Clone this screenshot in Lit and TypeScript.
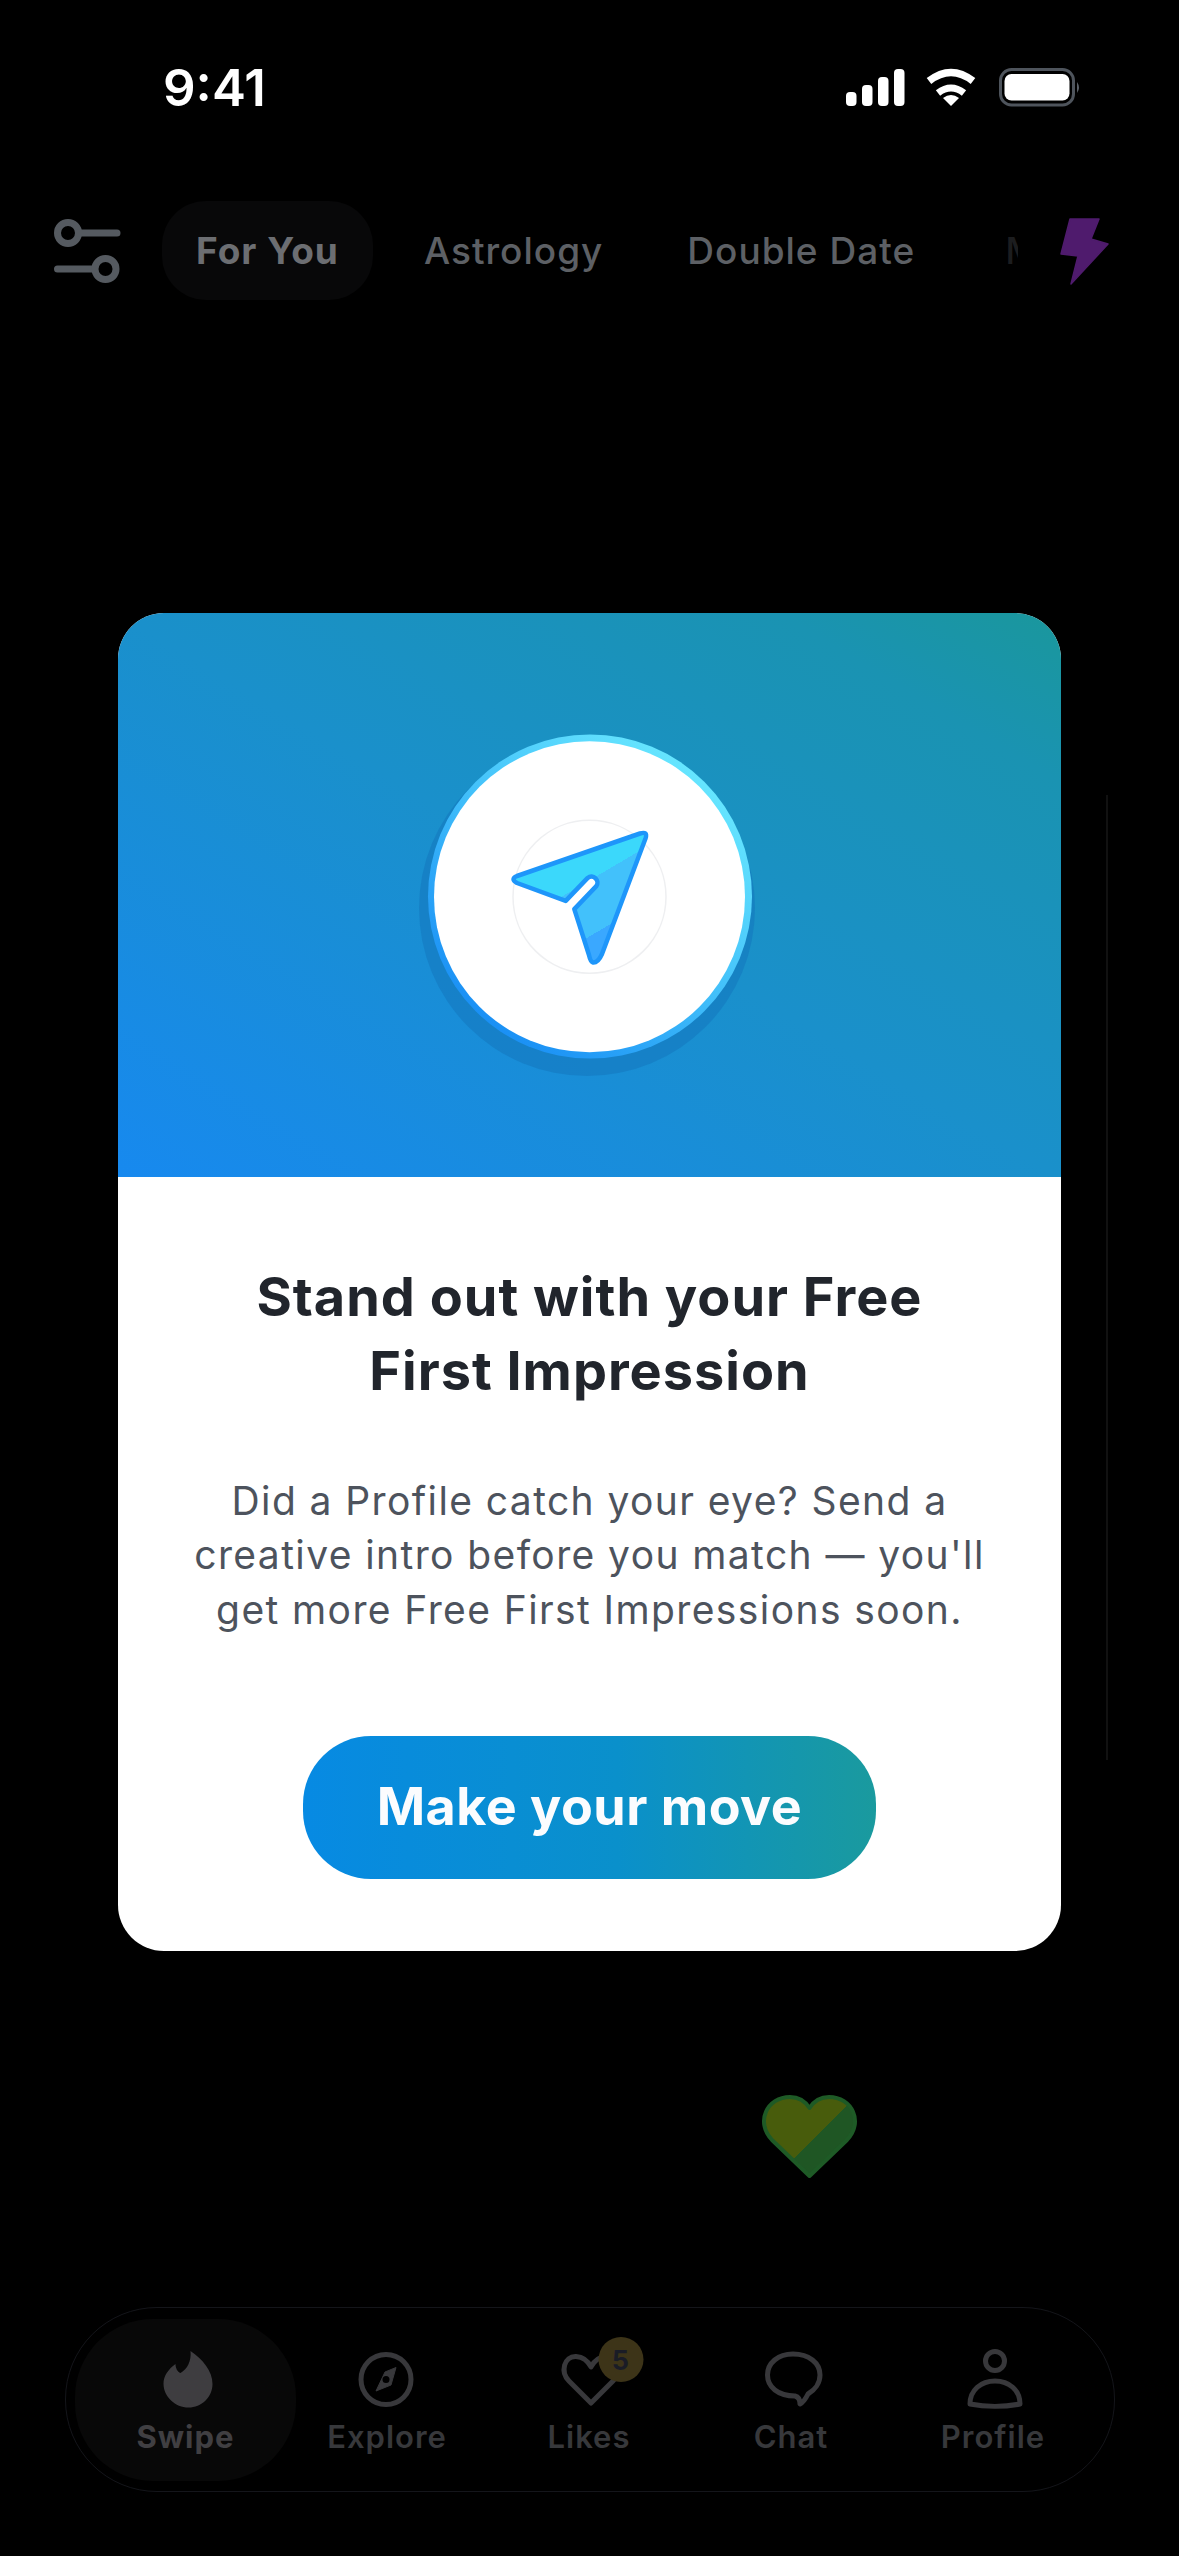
import { LitElement, html, css } from "lit";
import { customElement } from "lit/decorators.js";

@customElement("app-root")
export class AppRoot extends LitElement {
  static styles = css`
    :host {
      display: block;
      position: relative;
      width: 1179px;
      height: 2556px;
      overflow: hidden;
      background: #000;
      font-family: Inter, "Liberation Sans", sans-serif;
    }
    .status {
      box-sizing: border-box;
      height: 201px;
      padding: 60px 94px 0 163px;
      display: flex;
      justify-content: space-between;
      align-items: flex-start;
    }
    .time {
      color: #fff;
      font-size: 51px;
      font-weight: 600;
      line-height: 55px;
      letter-spacing: 0;
    }
    .status svg { width: 245px; height: 55px; display: block; }
    .tabs {
      height: 99px;
      padding-left: 52px;
      display: flex;
      align-items: center;
    }
    .filter { width: 70px; height: 70px; margin-right: 40px; flex: none; display: block; }
    .tab {
      height: 99px;
      padding: 0 33px;
      margin-right: 18px;
      display: flex;
      align-items: center;
      flex: none;
      color: #5d6065;
      font-size: 37px;
      font-weight: 500;
      letter-spacing: 1px;
      white-space: nowrap;
    }
    .tab.on {
      padding: 0 34px;
      background: #080809;
      border-radius: 44px;
      color: #6c6e72;
      font-weight: 700;
    }
    .peek {
      width: 13px;
      margin-left: 39px;
      margin-right: 42px;
      overflow: hidden;
      color: #1c1d1f;
      font-size: 37px;
      font-weight: 500;
      flex: none;
    }
    .bolt { width: 50px; height: 70px; flex: none; display: block; }
    .heart {
      display: block;
      width: 100px;
      height: 90px;
      margin: 1792px 0 0 760px;
    }
    .nav {
      box-sizing: border-box;
      width: 1050px;
      height: 185px;
      margin: 125px 0 0 65px;
      padding: 10.5px 0 0 18px;
      border: 1.5px solid #14151a;
      border-radius: 92px;
      display: grid;
      grid-template-columns: repeat(5, 202px);
    }
    .item {
      box-sizing: border-box;
      height: 162px;
      padding-top: 16px;
      display: flex;
      flex-direction: column;
      align-items: center;
      color: #37383b;
      font-size: 31px;
      font-weight: 600;
      letter-spacing: 1px;
      line-height: 40px;
    }
    .item.on {
      margin: 0 -10px 0 -9px;
      background: #080808;
      border-radius: 78px;
      color: #403f42;
      font-weight: 700;
    }
    .item svg { width: 100px; height: 74px; display: block; margin-bottom: 8px; }
    .badge-num { font: 700 27px Inter, "Liberation Sans", sans-serif; fill: #1a1c26; }
    .rail {
      position: absolute;
      left: 1106px;
      top: 795px;
      width: 2px;
      height: 965px;
      background: #111;
    }
    .modal {
      position: absolute;
      left: 118px;
      top: 613px;
      width: 943px;
      height: 1338px;
      background: #fff;
      border-radius: 46px;
      overflow: hidden;
      display: flex;
      flex-direction: column;
      align-items: center;
      text-align: center;
    }
    .hero {
      align-self: stretch;
      height: 564px;
      box-sizing: border-box;
      padding-top: 87px;
      display: flex;
      justify-content: center;
      background: linear-gradient(to top right, #1789ef 0%, #1a90cb 50%, #1a93b2 85%, #1a979c 100%);
    }
    .hero svg { width: 400px; height: 400px; display: block; }
    h1 {
      margin: 83px 0 0;
      color: #21252c;
      font-size: 54px;
      font-weight: 700;
      line-height: 74px;
      letter-spacing: 1px;
      white-space: nowrap;
    }
    p {
      margin: 65.5px 0 0;
      color: #4d535d;
      font-size: 39px;
      font-weight: 400;
      line-height: 54.5px;
      letter-spacing: 1.4px;
      white-space: nowrap;
    }
    button {
      width: 573px;
      height: 143px;
      margin-top: 99px;
      border: 0;
      padding: 0 0 3px;
      border-radius: 68px;
      background: linear-gradient(90deg, #078ae3 0%, #0a90cb 55%, #1a9a9e 100%);
      color: #fbfcfe;
      font-family: inherit;
      font-size: 52px;
      font-weight: 700;
      letter-spacing: 0.5px;
    }
  `;

  render() {
    return html`
      <div class="status">
        <div class="time">9:41</div>
        <svg viewBox="840 60 245 55">
          <rect x="846" y="92" width="10.5" height="14" rx="4" fill="#fff" />
          <rect x="862" y="85" width="10.5" height="21" rx="4" fill="#fff" />
          <rect x="878" y="77" width="10.5" height="29" rx="4" fill="#fff" />
          <rect x="894" y="69" width="10.5" height="37" rx="4" fill="#fff" />
          <path d="M929 81 Q951 64 973 81" fill="none" stroke="#fff" stroke-width="7.5" />
          <path d="M938 93 Q951 83 964 93" fill="none" stroke="#fff" stroke-width="7" />
          <path d="M943 98 Q951 92 959 98 L951 106Z" fill="#fff" />
          <rect x="1000.5" y="69.5" width="73" height="35.5" rx="11" fill="none" stroke="#4e545c" stroke-width="3" />
          <rect x="1004.5" y="74" width="65" height="26.5" rx="7" fill="#fff" />
          <path d="M1077 82 Q1081 87.5 1077 93Z" fill="#5a6068" />
        </svg>
      </div>

      <div class="tabs">
        <svg class="filter" viewBox="50 215 70 70" fill="none" stroke="#555a60" stroke-width="7">
          <circle cx="66" cy="232" r="10.5" />
          <path d="M77 232H115M55.500 268H92" stroke-linecap="round" />
          <circle cx="103.500" cy="268" r="10.500" />
        </svg>
        <div class="tab on">For You</div>
        <div class="tab">Astrology</div>
        <div class="tab">Double Date</div>
        <div class="peek">M</div>
        <svg class="bolt" viewBox="1059 215 50 70">
          <path d="M1069 218H1098L1090 238L1107 243L1070 283L1077 255L1060 253Z" fill="#4f1b6d" stroke="#4f1b6d" stroke-width="1.5" stroke-linejoin="round" />
        </svg>
      </div>

      <svg class="heart" viewBox="760 2092 100 90">
        <defs>
          <linearGradient id="hg" gradientUnits="userSpaceOnUse" x1="809" y1="2123" x2="829" y2="2143">
            <stop offset="0.5" stop-color="#485c0c" />
            <stop offset="0.5" stop-color="#1f5624" />
          </linearGradient>
        </defs>
        <path d="M809.500 2176 L772 2140 C755 2122 767 2097 790 2097 C798 2097 805 2101 809.500 2108 C814 2101 821 2097 829 2097 C852 2097 864 2122 847 2140Z" fill="url(#hg)" stroke="#1e5a26" stroke-width="4" stroke-linejoin="round" />
      </svg>

      <nav class="nav">
        <div class="item on">
          <svg viewBox="135.500 2335 100 74">
            <path d="M190 2351C202 2359 212 2371 212 2384C212 2397 201 2407.500 188 2407.500C175 2407.500 163 2397 163 2383.500C163 2376 168 2369 175 2364C175 2368 177 2372 180 2373C187 2369 191 2361 190 2351Z" fill="#3e3d40" />
          </svg>
          Swipe
        </div>
        <div class="item">
          <svg viewBox="337 2335 100 74">
            <circle cx="386" cy="2379.500" r="25" fill="none" stroke="#38383b" stroke-width="5" />
            <path d="M396 2367.500L385 2372L376 2391L391 2385Z" fill="#38383b" stroke="#38383b" stroke-width="1" stroke-linejoin="round" />
            <circle cx="386" cy="2379.500" r="3.500" fill="#000" />
          </svg>
          Explore
        </div>
        <div class="item">
          <svg viewBox="539 2335 100 74" overflow="visible">
            <path d="M591 2403L569 2381C560 2372 564 2356 576 2356.500C583 2357 588 2361 591 2367C594 2361 599 2357 606 2356.500C618 2356 622 2372 613 2381Z" fill="none" stroke="#38383b" stroke-width="5" stroke-linejoin="round" />
            <circle cx="621" cy="2359.500" r="22.500" fill="#3d3418" />
            <text class="badge-num" x="621" y="2369.500" text-anchor="middle">5</text>
          </svg>
          Likes
        </div>
        <div class="item">
          <svg viewBox="741 2335 100 74">
            <path d="M793 2354C809 2354 820 2363 820 2375C820 2383 815 2390 808 2394C806 2398 804 2402 800 2404C800 2400 799 2397 795 2396C778 2396 767.500 2387 767.500 2375C767.500 2363 778 2354 793 2354Z" fill="none" stroke="#38383b" stroke-width="5" stroke-linejoin="round" />
          </svg>
          Chat
        </div>
        <div class="item">
          <svg viewBox="943 2335 100 74">
            <circle cx="995" cy="2361" r="9.500" fill="none" stroke="#38383b" stroke-width="5" />
            <path d="M970 2404C970 2390 981 2381 995 2381C1009 2381 1020 2390 1020 2404C1005 2407 985 2407 970 2404Z" fill="none" stroke="#38383b" stroke-width="5" stroke-linejoin="round" />
          </svg>
          Profile
        </div>
      </nav>

      <div class="rail"></div>

      <section class="modal">
        <div class="hero">
          <svg viewBox="390 700 400 400">
            <defs>
              <linearGradient id="ring" x1="0.85" y1="0.1" x2="0.2" y2="0.9">
                <stop offset="0" stop-color="#68e8ff" />
                <stop offset="0.5" stop-color="#42c0fa" />
                <stop offset="1" stop-color="#1a90f5" />
              </linearGradient>
              <linearGradient id="plane" gradientUnits="userSpaceOnUse" x1="590" y1="840" x2="640" y2="925">
                <stop offset="0.35" stop-color="#3bd8fb" />
                <stop offset="0.35" stop-color="#42c1fb" />
                <stop offset="0.84" stop-color="#42c1fb" />
                <stop offset="0.84" stop-color="#3aa8ff" />
              </linearGradient>
            </defs>
            <circle cx="587" cy="908" r="168" fill="#1476bd" opacity="0.55" />
            <circle cx="590" cy="896.500" r="162" fill="url(#ring)" />
            <circle cx="589.500" cy="896.800" r="155.500" fill="#fff" />
            <circle cx="589.500" cy="896.800" r="76.500" fill="none" stroke="#eeeff1" stroke-width="1.500" />
            <path d="M640 833.500Q648 831 645.500 838.500L602 954Q598 963 593 962.500Q590.500 962 589 955L574.300 909.100L596.300 886.100A6 6 0 0 0 587.700 877.900L565.700 900.900L517 883Q510 879 517 876Z" fill="url(#plane)" stroke="#1e96fa" stroke-width="4.500" stroke-linejoin="round" />
          </svg>
        </div>
        <h1>Stand out with your Free<br />First Impression</h1>
        <p>Did a Profile catch your eye? Send a<br />creative intro before you match — you'll<br />get more Free First Impressions soon.</p>
        <button>Make your move</button>
      </section>
    `;
  }
}
